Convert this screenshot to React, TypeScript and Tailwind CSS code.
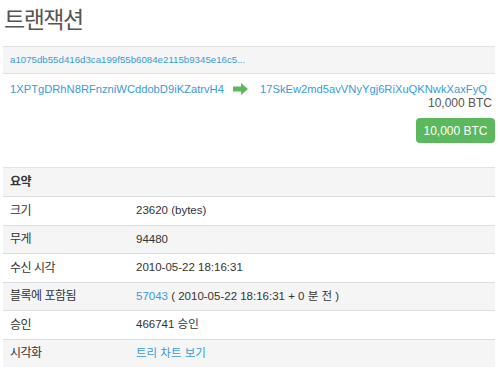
import React from 'react';

const font = { fontFamily: '"Liberation Sans", "Noto Sans CJK KR", sans-serif' };

type Row = { label: string; value: React.ReactNode; striped: boolean };

function Arrow() {
    return (
        <svg width="15" height="12" viewBox="0 0 15 12" className="block">
            <path d="M0 3.5 H8 V0 L15 6 L8 12 V8.5 H0 Z" fill="#5cb85c" />
        </svg>
    );
}

export default function App() {
    const rows: Row[] = [
        {label: '크기', value: '23620 (bytes)', striped: false},
        {label: '무게', value: '94480', striped: true},
        {label: '수신 시각', value: '2010-05-22 18:16:31', striped: false},
        {
            label: '블록에 포함됨',
            value: (
                <span>
                    <a className="text-[#3a9ad9]">57043</a> ( 2010-05-22 18:16:31 + 0 분 전 )
                </span>
            ),
            striped: true,
        },
        {label: '승인', value: '466741 승인', striped: false},
        {label: '시각화', value: <a className="text-[#3a9ad9]">트리 차트 보기</a>, striped: true},
    ];

    return (
        <div className="w-[500px] h-[374px] bg-white overflow-hidden px-[3px] pr-[5px] text-[#333]" style={font}>
            <h1 className="h-[46px] pt-[4px] pl-[1px] text-[23px] leading-[32px] text-[#555] tracking-[-1.5px]">트랜잭션</h1>

            <div className="h-[28px] border-y border-[#e3e3e3] bg-[#f5f5f5] px-[7px] flex items-center text-[9.7px] text-[#3a9ad9]">
                a1075db55d416d3ca199f55b6084e2115b9345e16c5...
            </div>

            <div className="h-[94px] border-b border-[#e3e3e3]">
                <div className="flex pt-[8px] text-[11px] leading-[14px]">
                    <div className="w-[222px] pl-[7px] text-[#3a9ad9] text-[11.2px]">1XPTgDRhN8RFnzniWCddobD9iKZatrvH4</div>
                    <div className="w-[35px] pl-[8px] pt-[1px]"><Arrow /></div>
                    <div className="flex-1 pr-[3px]">
                        <div className="text-[#3a9ad9] text-[11.2px]">17SkEw2md5avVNyYgj6RiXuQKNwkXaxFyQ</div>
                        <div className="text-right text-[#555] text-[12px]">10,000 BTC</div>
                    </div>
                </div>
                <div className="flex justify-end mt-[8px]">
                    <span className="w-[79px] h-[25px] rounded-[4px] bg-[#5cb85c] text-white text-[12px] flex items-center justify-center">
                        10,000 BTC
                    </span>
                </div>
            </div>

            <div className="h-[28px] bg-[#f5f5f5] px-[7px] flex items-center text-[12px] font-bold tracking-[-0.5px]">
                요약
            </div>
            {rows.map((row) => (
                <div
                    key={row.label}
                    className={`h-[28.5px] border-t border-[#dddddd] flex items-center text-[11.5px] ${row.striped ? 'bg-[#f5f5f5]' : 'bg-white'}`}
                >
                    <div className="w-[133px] pl-[7px] text-[12px] tracking-[-0.5px]">{row.label}</div>
                    <div className="flex-1">{row.value}</div>
                </div>
            ))}
        </div>
    );
}
